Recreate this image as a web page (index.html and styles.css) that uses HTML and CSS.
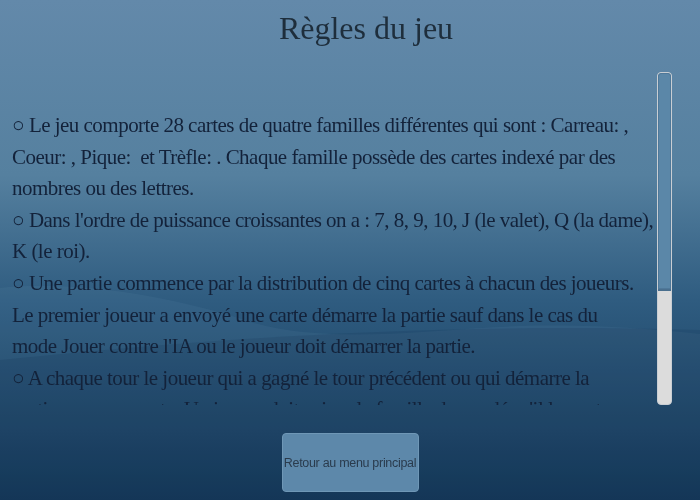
FILE: index.html
```html
<!DOCTYPE html>
<html lang="fr">
<head>
<meta charset="utf-8">
<title>Règles du jeu</title>
<link rel="stylesheet" href="styles.css">
</head>
<body>
<svg class="backdrop" viewBox="0 0 700 500" preserveAspectRatio="none" aria-hidden="true">
  <defs>
    <linearGradient id="bg" x1="0" y1="0" x2="0" y2="1">
      <stop offset="0" stop-color="#6389aa"/>
      <stop offset="0.35" stop-color="#55809f"/>
      <stop offset="0.6" stop-color="#2f5c80"/>
      <stop offset="1" stop-color="#0d3152"/>
    </linearGradient>
  </defs>
  <rect width="700" height="500" fill="url(#bg)"/>
  <path d="M0,288 C70,280 170,295 250,322 C330,345 420,330 520,326 C600,324 660,330 700,334 L700,500 L0,500 Z" fill="#8fb6d6" opacity="0.07"/>
  <path d="M0,360 C200,340 420,322 700,330 L700,500 L0,500 Z" fill="#052440" opacity="0.12"/>
</svg>
<main class="page">
  <h1 class="title">Règles du jeu</h1>
  <div class="viewer">
    <div class="rules">
      <p>○ Le jeu comporte 28 cartes de quatre familles différentes qui sont : Carreau: ,<br>Coeur: , Pique:&nbsp; et Trèfle: . Chaque famille possède des cartes indexé par des<br>nombres ou des lettres.</p>
      <p>○ Dans l'ordre de puissance croissantes on a : 7, 8, 9, 10, J (le valet), Q (la dame),<br>K (le roi).</p>
      <p>○ Une partie commence par la distribution de cinq cartes à chacun des joueurs.<br>Le premier joueur a envoyé une carte démarre la partie sauf dans le cas du<br>mode Jouer contre l'IA ou le joueur doit démarrer la partie.</p>
      <p>○ A chaque tour le joueur qui a gagné le tour précédent ou qui démarre la<br>partie pose une carte. Un joueur doit suivre la famille demandée s'il le peut,<br>sinon il peut jouer n'importe quelle carte.</p>
      <p>○ Le joueur qui pose la carte la plus forte de la famille demandée remporte<br>le tour et commence le tour suivant.</p>
      <p>○ Le joueur qui remporte le dernier tour gagne la partie.</p>
    </div>
    <div class="scrollbar" aria-hidden="true">
      <div class="thumb"></div>
    </div>
  </div>
  <div class="actions">
    <button class="back" type="button">Retour au menu principal</button>
  </div>
</main>
</body>
</html>
```
FILE: styles.css
```css
html, body {
  margin: 0;
  padding: 0;
  height: 500px;
  overflow: hidden;
}

body {
  background: #0d3152;
}

.backdrop {
  position: fixed;
  left: 0;
  top: 0;
  width: 700px;
  height: 500px;
  z-index: 0;
}

.page {
  position: relative;
  z-index: 1;
  height: 500px;
  display: flex;
  flex-direction: column;
}

.title {
  margin: 0 0 16px 0;
  padding-left: 32px;
  height: 56px;
  line-height: 56px;
  text-align: center;
  font-family: "Liberation Serif", serif;
  font-weight: normal;
  font-size: 32px;
  color: #1e2e3c;
}

.viewer {
  display: flex;
  margin: 0 28px 0 12px;
  height: 333px;
}

.rules {
  flex: 1;
  min-width: 0;
  overflow: hidden;
  padding-top: 38px;
  box-sizing: border-box;
  font-family: "Liberation Serif", serif;
  font-size: 21px;
  letter-spacing: -0.52px;
  line-height: 31.6px;
  color: #13223a;
}

.rules p {
  margin: 0;
  white-space: nowrap;
}

.scrollbar {
  width: 15px;
  flex: 0 0 15px;
  background: #dcdcdc;
  border: 1px solid #c9ced3;
  border-radius: 4px;
  box-sizing: border-box;
  overflow: hidden;
}

.thumb {
  height: 216px;
  background: #5b87a8;
  border-bottom: 2px solid #4a6f8e;
  box-shadow: inset 0 0 0 1px #4f7899;
  border-radius: 3px 3px 0 0;
}

.actions {
  display: flex;
  justify-content: center;
  padding-top: 28px;
}

.back {
  width: 137px;
  height: 59px;
  padding: 0;
  background: #5d88aa;
  border: 1px solid #6f97b6;
  border-radius: 4px;
  font-family: "Liberation Sans", sans-serif;
  font-size: 12.5px;
  letter-spacing: -0.3px;
  color: #2a3b4d;
  white-space: nowrap;
  text-align: center;
}
```
